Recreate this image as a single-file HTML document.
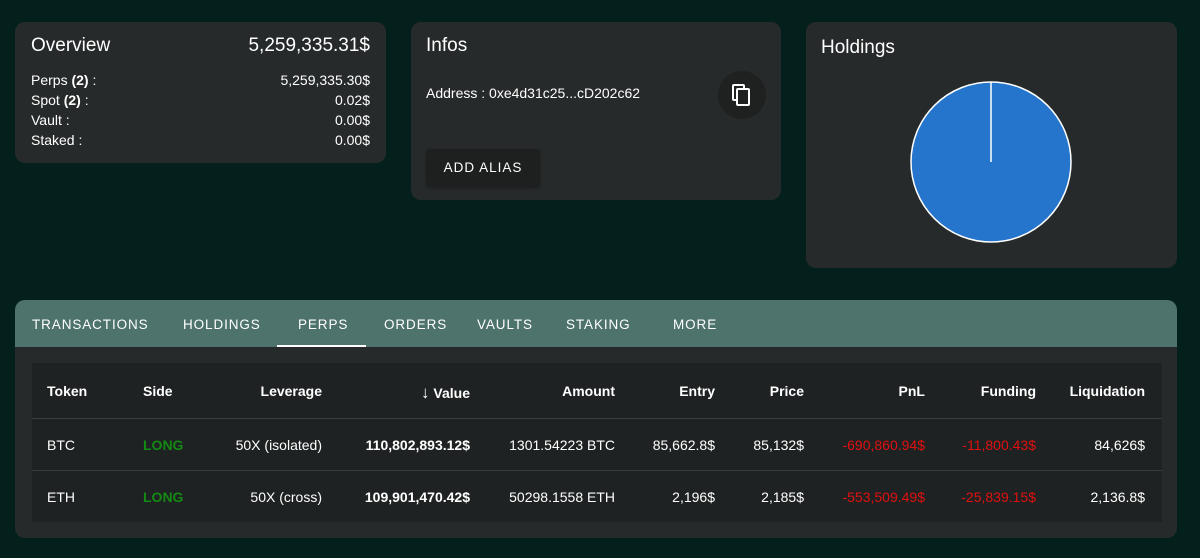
<!DOCTYPE html><html><head><style>
*{box-sizing:border-box;margin:0;padding:0}
body{width:1200px;height:558px;background:#03201d;font-family:"Liberation Sans",sans-serif;color:#fff;position:relative;overflow:hidden}
.card{position:absolute;background:#262a2a;border-radius:10px}
.abs{position:absolute;white-space:nowrap}
.r{text-align:right}
.t{font-size:13.5px;letter-spacing:0.9px;top:317px}
.c{position:absolute;font-size:14px;white-space:nowrap}
</style></head><body>
<div class="card" style="left:15px;top:22px;width:371px;height:141px">
<div class="abs" style="left:16px;top:13px;font-size:19px">Overview</div>
<div class="abs" style="right:16px;top:13px;font-size:19px">5,259,335.31$</div>
<div class="abs" style="left:16px;top:48px;font-size:14px;line-height:20px">Perps <b>(2)</b> :<br>Spot <b>(2)</b> :<br>Vault :<br>Staked :</div>
<div class="abs r" style="right:16px;top:48px;font-size:14px;line-height:20px">5,259,335.30$<br>0.02$<br>0.00$<br>0.00$</div>
</div>
<div class="card" style="left:411px;top:22px;width:370px;height:178px">
<div class="abs" style="left:15px;top:13px;font-size:19px">Infos</div>
<div class="abs" style="left:15px;top:63px;font-size:14px">Address : 0xe4d31c25...cD202c62</div>
<div class="abs" style="left:307px;top:49px;width:48px;height:48px;border-radius:50%;background:#1f2121">
<svg width="48" height="48" viewBox="0 0 48 48"><rect x="15" y="14" width="11" height="15" fill="none" stroke="#fff" stroke-width="2" rx="1"/><rect x="19" y="18" width="12" height="16" fill="#1f2121" stroke="#fff" stroke-width="2" rx="1"/></svg></div>
<div class="abs" style="left:15px;top:127px;width:114px;height:37px;background:#1e1f1f;border-radius:4px;font-size:13.5px;letter-spacing:1px;text-align:center;line-height:37px;box-shadow:0 2px 3px rgba(0,0,0,.3)">ADD ALIAS</div>
</div>
<div class="card" style="left:806px;top:22px;width:371px;height:246px">
<div class="abs" style="left:15px;top:15px;font-size:19px">Holdings</div>
<svg class="abs" style="left:104px;top:59px" width="162" height="162"><circle cx="81" cy="81" r="80" fill="#2675cc" stroke="#fff" stroke-width="1.5"/><line x1="81" y1="1" x2="81" y2="81" stroke="#fff" stroke-width="1.5"/></svg>
</div>
<div class="card" style="left:15px;top:300px;width:1162px;height:238px;overflow:hidden">
<div style="position:absolute;left:0;top:0;width:100%;height:47px;background:#4d736c"></div>
<div style="position:absolute;left:262px;top:45px;width:89px;height:2px;background:#fff"></div>
<div style="position:absolute;left:17px;top:63px;width:1130px;height:159px;background:#1f2222"></div>
<div style="position:absolute;left:17px;top:118px;width:1130px;height:1px;background:#3a3e3e"></div>
<div style="position:absolute;left:17px;top:170px;width:1130px;height:1px;background:#3a3e3e"></div>
</div>
<div class="abs t" style="left:32px">TRANSACTIONS</div>
<div class="abs t" style="left:183px">HOLDINGS</div>
<div class="abs t" style="left:298px">PERPS</div>
<div class="abs t" style="left:384px">ORDERS</div>
<div class="abs t" style="left:477px">VAULTS</div>
<div class="abs t" style="left:566px">STAKING</div>
<div class="abs t" style="left:673px">MORE</div>
<div style="font-weight:600">
<div class="c" style="left:47px;top:383px">Token</div>
<div class="c" style="left:143px;top:383px">Side</div>
<div class="c r" style="right:878px;top:383px">Leverage</div>
<div class="c r" style="right:730px;top:383px"><span style="font-size:17px;font-weight:normal">↓</span> Value</div>
<div class="c r" style="right:585px;top:383px">Amount</div>
<div class="c r" style="right:485px;top:383px">Entry</div>
<div class="c r" style="right:396px;top:383px">Price</div>
<div class="c r" style="right:275px;top:383px">PnL</div>
<div class="c r" style="right:164px;top:383px">Funding</div>
<div class="c r" style="right:55px;top:383px">Liquidation</div>
</div>
<div class="c" style="left:47px;top:437px">BTC</div>
<div class="c" style="left:143px;top:437px;color:#138a13;font-weight:bold">LONG</div>
<div class="c r" style="right:878px;top:437px">50X (isolated)</div>
<div class="c r" style="right:730px;top:437px;font-weight:bold">110,802,893.12$</div>
<div class="c r" style="right:585px;top:437px">1301.54223 BTC</div>
<div class="c r" style="right:485px;top:437px">85,662.8$</div>
<div class="c r" style="right:396px;top:437px">85,132$</div>
<div class="c r" style="right:275px;top:437px;color:#e01010">-690,860.94$</div>
<div class="c r" style="right:164px;top:437px;color:#e01010">-11,800.43$</div>
<div class="c r" style="right:55px;top:437px">84,626$</div>
<div class="c" style="left:47px;top:489px">ETH</div>
<div class="c" style="left:143px;top:489px;color:#138a13;font-weight:bold">LONG</div>
<div class="c r" style="right:878px;top:489px">50X (cross)</div>
<div class="c r" style="right:730px;top:489px;font-weight:bold">109,901,470.42$</div>
<div class="c r" style="right:585px;top:489px">50298.1558 ETH</div>
<div class="c r" style="right:485px;top:489px">2,196$</div>
<div class="c r" style="right:396px;top:489px">2,185$</div>
<div class="c r" style="right:275px;top:489px;color:#e01010">-553,509.49$</div>
<div class="c r" style="right:164px;top:489px;color:#e01010">-25,839.15$</div>
<div class="c r" style="right:55px;top:489px">2,136.8$</div>
</body></html>
